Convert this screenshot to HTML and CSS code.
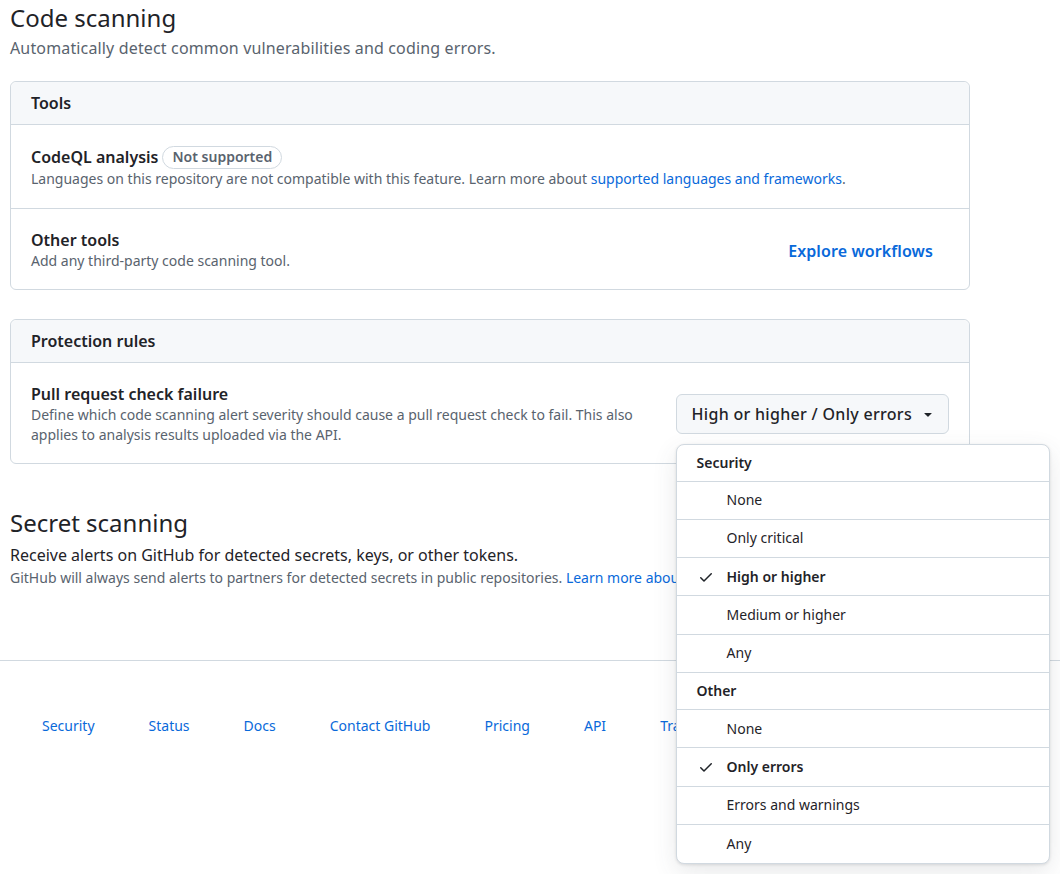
FILE: index.html
```html
<!DOCTYPE html>
<html lang="en">
<head>
<meta charset="utf-8">
<title>Code security</title>
<link rel="stylesheet" href="styles.css">
</head>
<body>
<main class="page">
  <section class="section">
    <h2 class="subhead">Code scanning</h2>
    <p class="subhead-desc">Automatically detect common vulnerabilities and coding errors.</p>

    <div class="box">
      <div class="box-header">Tools</div>
      <div class="box-row row-codeql">
        <div class="row-main">
          <div class="row-title row-title-badge">CodeQL analysis <span class="badge">Not supported</span></div>
          <div class="row-desc">Languages on this repository are not compatible with this feature. Learn more about <a href="#" class="link">supported languages and frameworks</a>.</div>
        </div>
      </div>
      <div class="box-row">
        <div class="row-main">
          <div class="row-title">Other tools</div>
          <div class="row-desc">Add any third-party code scanning tool.</div>
        </div>
        <a href="#" class="action-link">Explore workflows</a>
      </div>
    </div>

    <div class="box box-protection">
      <div class="box-header">Protection rules</div>
      <div class="box-row">
        <div class="row-main row-narrow">
          <div class="row-title">Pull request check failure</div>
          <div class="row-desc">Define which code scanning alert severity should cause a pull request check to fail. This also applies to analysis results uploaded via the API.</div>
        </div>
        <div class="select-wrap">
          <button class="select-btn" type="button">High or higher / Only errors
            <svg class="caret" viewBox="0 0 16 16" width="16" height="16"><path d="m4.427 7.427 3.396 3.396a.25.25 0 0 0 .354 0l3.396-3.396A.25.25 0 0 0 11.396 7H4.604a.25.25 0 0 0-.177.427Z"/></svg>
          </button>
          <div class="menu">
            <div class="menu-header">Security</div>
            <div class="menu-item">None</div>
            <div class="menu-item">Only critical</div>
            <div class="menu-item selected"><svg class="check" viewBox="0 0 16 16" width="16" height="16"><path d="M13.78 4.22a.75.75 0 0 1 0 1.06l-7.25 7.25a.75.75 0 0 1-1.06 0L2.220 9.28a.751.751 0 0 1 .018-1.042.751.751 0 0 1 1.042-.018L6 10.94l6.72-6.72a.75.75 0 0 1 1.06 0Z"/></svg>High or higher</div>
            <div class="menu-item">Medium or higher</div>
            <div class="menu-item">Any</div>
            <div class="menu-header">Other</div>
            <div class="menu-item">None</div>
            <div class="menu-item selected"><svg class="check" viewBox="0 0 16 16" width="16" height="16"><path d="M13.78 4.22a.75.75 0 0 1 0 1.06l-7.25 7.25a.75.75 0 0 1-1.06 0L2.22 9.28a.751.751 0 0 1 .018-1.042.751.751 0 0 1 1.042-.018L6 10.94l6.72-6.72a.75.75 0 0 1 1.06 0Z"/></svg>Only errors</div>
            <div class="menu-item">Errors and warnings</div>
            <div class="menu-item last">Any</div>
          </div>
        </div>
      </div>
    </div>
  </section>

  <section class="section secret">
    <h2 class="subhead">Secret scanning</h2>
    <p class="secret-lead">Receive alerts on GitHub for detected secrets, keys, or other tokens.</p>
    <p class="secret-note">GitHub will always send alerts to partners for detected secrets in public repositories. <a href="#" class="link">Learn more about partner patterns</a>.</p>
  </section>
</main>

<footer class="footer">
  <nav class="footer-links">
    <a href="#">Security</a>
    <a href="#">Status</a>
    <a href="#">Docs</a>
    <a href="#">Contact GitHub</a>
    <a href="#">Pricing</a>
    <a href="#">API</a>
    <a href="#">Training</a>
    <a href="#">Blog</a>
    <a href="#">About</a>
  </nav>
</footer>
</body>
</html>
```

FILE: styles.css
```css
* { box-sizing: border-box; }

html, body {
  margin: 0;
  padding: 0;
  background: #ffffff;
}

body {
  font-family: "Segoe UI", "Noto Sans", "Liberation Sans", sans-serif;
  color: #1f2328;
  font-size: 14px;
  line-height: 20px;
  min-height: 874px;
}

.page {
  width: 970px;
  padding: 3px 0 0 10px;
}

.subhead {
  margin: 0;
  font-size: 24px;
  line-height: 30px;
  font-weight: 400;
  color: #1f2328;
}

.subhead-desc {
  margin: 3px 0 0;
  font-size: 16px;
  line-height: 24px;
  color: #59636e;
  letter-spacing: 0.15px;
}

.box {
  margin-top: 21px;
  border: 1px solid #d1d9e0;
  border-radius: 6px;
  background: #fff;
}

.box-protection {
  margin-top: 29px;
}

.box-header {
  height: 43px;
  display: flex;
  align-items: center;
  padding: 0 20px;
  background: #f6f8fa;
  border-bottom: 1px solid #d1d9e0;
  border-radius: 6px 6px 0 0;
  font-size: 16px;
  font-weight: 600;
}

.box-row {
  display: flex;
  align-items: center;
  justify-content: space-between;
  padding: 20px 20px 18px;
  border-bottom: 1px solid #d1d9e0;
}

.row-codeql {
  padding-bottom: 19px;
}

.box-row:last-child {
  border-bottom: none;
}

.row-main {
  flex: 1;
}

.row-narrow {
  flex: 0 0 620px;
}

.row-title {
  font-size: 16px;
  line-height: 22px;
  font-weight: 600;
  display: flex;
  align-items: center;
  gap: 4px;
}

.row-title-badge {
  line-height: 24px;
}

.row-desc {
  font-size: 14px;
  line-height: 20px;
  color: #59636e;
}

.badge {
  display: inline-flex;
  align-items: center;
  height: 23px;
  padding: 0 9px;
  border: 1px solid #d1d9e0;
  border-radius: 12px;
  font-size: 14px;
  font-weight: 600;
  color: #59636e;
  line-height: 20px;
}

.link {
  color: #0969da;
  text-decoration: none;
}

.action-link {
  color: #0969da;
  font-size: 16px;
  font-weight: 600;
  text-decoration: none;
  margin-right: 16px;
  margin-top: 2px;
  letter-spacing: 0.1px;
}

.select-wrap {
  position: relative;
}

.select-btn {
  display: flex;
  align-items: center;
  gap: 8px;
  height: 40px;
  padding: 0 12px 0 15px;
  background: #f6f8fa;
  border: 1px solid #d1d9e0;
  border-radius: 6px;
  font-family: inherit;
  font-size: 16px;
  font-weight: 500;
  color: #1f2328;
  letter-spacing: 0.3px;
  margin-top: -1px;
}

.caret {
  fill: #1f2328;
}

.menu {
  position: absolute;
  top: 49px;
  left: 0;
  width: 374px;
  background: #fff;
  border: 1px solid #d1d9e0;
  border-radius: 8px;
  box-shadow: 0 8px 24px rgba(66, 74, 83, 0.12), 0 1px 3px rgba(31, 35, 40, 0.12);
  z-index: 10;
  overflow: hidden;
}

.menu-header {
  height: 37px;
  display: flex;
  align-items: center;
  padding: 0 20px;
  font-size: 14px;
  font-weight: 600;
  color: #1f2328;
  border-bottom: 1px solid #d1d9e0;
}

.menu-item {
  height: 38.3px;
  display: flex;
  align-items: center;
  padding: 0 20px 0 50px;
  font-size: 14px;
  color: #1f2328;
  border-bottom: 1px solid #d1d9e0;
  position: relative;
}

.menu-item.last {
  border-bottom: none;
}

.menu-item.selected {
  font-weight: 600;
}

.check {
  position: absolute;
  left: 21px;
  top: 50%;
  margin-top: -8px;
  fill: #1f2328;
}

.secret {
  margin-top: 44px;
}

.secret-lead {
  margin: 5px 0 0;
  font-size: 16px;
  line-height: 24px;
  color: #1f2328;
}

.secret-note {
  margin: 1px 0 0;
  font-size: 14px;
  line-height: 20px;
  color: #59636e;
  white-space: nowrap;
}

.footer {
  margin-top: 72px;
  border-top: 1px solid #d1d9e0;
  padding-top: 55px;
}

.footer-links {
  display: flex;
  gap: 54px;
  padding-left: 42px;
  white-space: nowrap;
}

.footer-links a {
  color: #0969da;
  text-decoration: none;
  font-size: 14px;
  line-height: 20px;
}
```
